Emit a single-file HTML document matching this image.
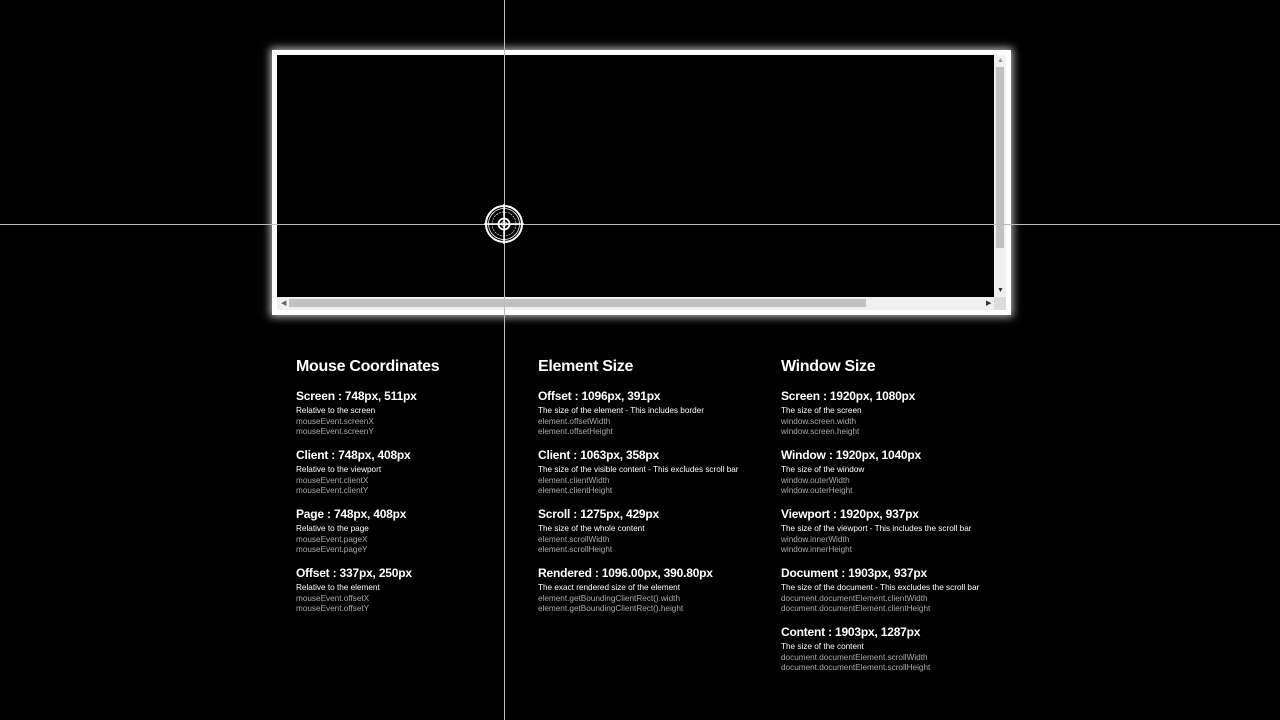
<!DOCTYPE html>
<html><head><style>
body{margin:0;width:1280px;height:720px;background:#000;overflow:hidden;position:relative;font-family:"Liberation Sans",sans-serif;color:#fff}
.box{position:absolute;left:272px;top:50px;width:729px;height:255px;border:5px solid #fff;box-shadow:0 0 8px 2px rgba(255,255,255,.7);background:#000}
.vs{position:absolute;left:994px;top:55px;width:12px;height:242px;background:#f0f0f0}
.vt{position:absolute;left:996px;top:67px;width:8px;height:181px;background:#c1c1c1}
.hs{position:absolute;left:277px;top:297px;width:717px;height:13px;background:#f0f0f0}
.ht{position:absolute;left:289px;top:299px;width:577px;height:8px;background:#c1c1c1}
.corner{position:absolute;left:994px;top:297px;width:12px;height:13px;background:#dcdcdc}
.vl{position:absolute;left:504px;top:0;width:1px;height:720px;background:#bbb}
.hl{position:absolute;left:0;top:224px;width:1280px;height:1px;background:#bbb}
.col{position:absolute;top:355px}
h2{margin:0 0 12px;padding-top:2px;font-size:16px;font-weight:bold;height:20px;line-height:20px;letter-spacing:-0.3px}
.it{position:relative;height:59px}
.t{font-size:12px;font-weight:bold;line-height:16px;letter-spacing:-0.2px;margin-top:-1px}
.d{font-size:8.2px;line-height:11px;margin-top:1px}
.c{font-size:8.2px;line-height:9.5px;color:#aaa;margin-top:1px}
</style></head><body>
<div class="box"></div>
<div class="vs"></div><div class="vt"></div>
<div class="hs"></div><div class="ht"></div><div class="corner"></div>
<div style="position:absolute;left:281px;top:299px;font-size:7px;color:#666">◀</div>
<div style="position:absolute;left:986px;top:299px;font-size:7px;color:#333">▶</div>
<div style="position:absolute;left:997px;top:57px;font-size:7px;color:#999">▲</div>
<div style="position:absolute;left:997px;top:287px;font-size:7px;color:#333">▼</div>
<div class="vl"></div><div class="hl"></div>
<svg style="position:absolute;left:484px;top:204px" width="40" height="40" viewBox="-20 -20 40 40" fill="none" stroke="#fff">
<circle r="18" stroke-width="2"/><circle r="15.5" stroke-width="0.8"/><circle r="12" stroke-width="0.6" stroke-dasharray="2 1"/><circle r="5.5" stroke-width="1.8"/><circle r="2.5" stroke-width="0.8"/>
<path d="M-22 0H22M0-22V22" stroke-width="1.5"/></svg>
<div class="col" style="left:296px"><h2>Mouse Coordinates</h2>
<div class="it" style="top:0"><div class="t">Screen : 748px, 511px</div><div class="d">Relative to the screen</div><div class="c">mouseEvent.screenX<br>mouseEvent.screenY</div></div>
<div class="it" style="top:1px"><div class="t">Client : 748px, 408px</div><div class="d">Relative to the viewport</div><div class="c">mouseEvent.clientX<br>mouseEvent.clientY</div></div>
<div class="it" style="top:2px"><div class="t">Page : 748px, 408px</div><div class="d">Relative to the page</div><div class="c">mouseEvent.pageX<br>mouseEvent.pageY</div></div>
<div class="it" style="top:3px"><div class="t">Offset : 337px, 250px</div><div class="d">Relative to the element</div><div class="c">mouseEvent.offsetX<br>mouseEvent.offsetY</div></div>
</div>
<div class="col" style="left:538px"><h2>Element Size</h2>
<div class="it" style="top:0"><div class="t">Offset : 1096px, 391px</div><div class="d">The size of the element - This includes border</div><div class="c">element.offsetWidth<br>element.offsetHeight</div></div>
<div class="it" style="top:1px"><div class="t">Client : 1063px, 358px</div><div class="d">The size of the visible content - This excludes scroll bar</div><div class="c">element.clientWidth<br>element.clientHeight</div></div>
<div class="it" style="top:2px"><div class="t">Scroll : 1275px, 429px</div><div class="d">The size of the whole content</div><div class="c">element.scrollWidth<br>element.scrollHeight</div></div>
<div class="it" style="top:3px"><div class="t">Rendered : 1096.00px, 390.80px</div><div class="d">The exact rendered size of the element</div><div class="c">element.getBoundingClientRect().width<br>element.getBoundingClientRect().height</div></div>
</div>
<div class="col" style="left:781px"><h2>Window Size</h2>
<div class="it" style="top:0"><div class="t">Screen : 1920px, 1080px</div><div class="d">The size of the screen</div><div class="c">window.screen.width<br>window.screen.height</div></div>
<div class="it" style="top:1px"><div class="t">Window : 1920px, 1040px</div><div class="d">The size of the window</div><div class="c">window.outerWidth<br>window.outerHeight</div></div>
<div class="it" style="top:2px"><div class="t">Viewport : 1920px, 937px</div><div class="d">The size of the viewport - This includes the scroll bar</div><div class="c">window.innerWidth<br>window.innerHeight</div></div>
<div class="it" style="top:3px"><div class="t">Document : 1903px, 937px</div><div class="d">The size of the document - This excludes the scroll bar</div><div class="c">document.documentElement.clientWidth<br>document.documentElement.clientHeight</div></div>
<div class="it" style="top:4px"><div class="t">Content : 1903px, 1287px</div><div class="d">The size of the content</div><div class="c">document.documentElement.scrollWidth<br>document.documentElement.scrollHeight</div></div>
</div>
</body></html>
